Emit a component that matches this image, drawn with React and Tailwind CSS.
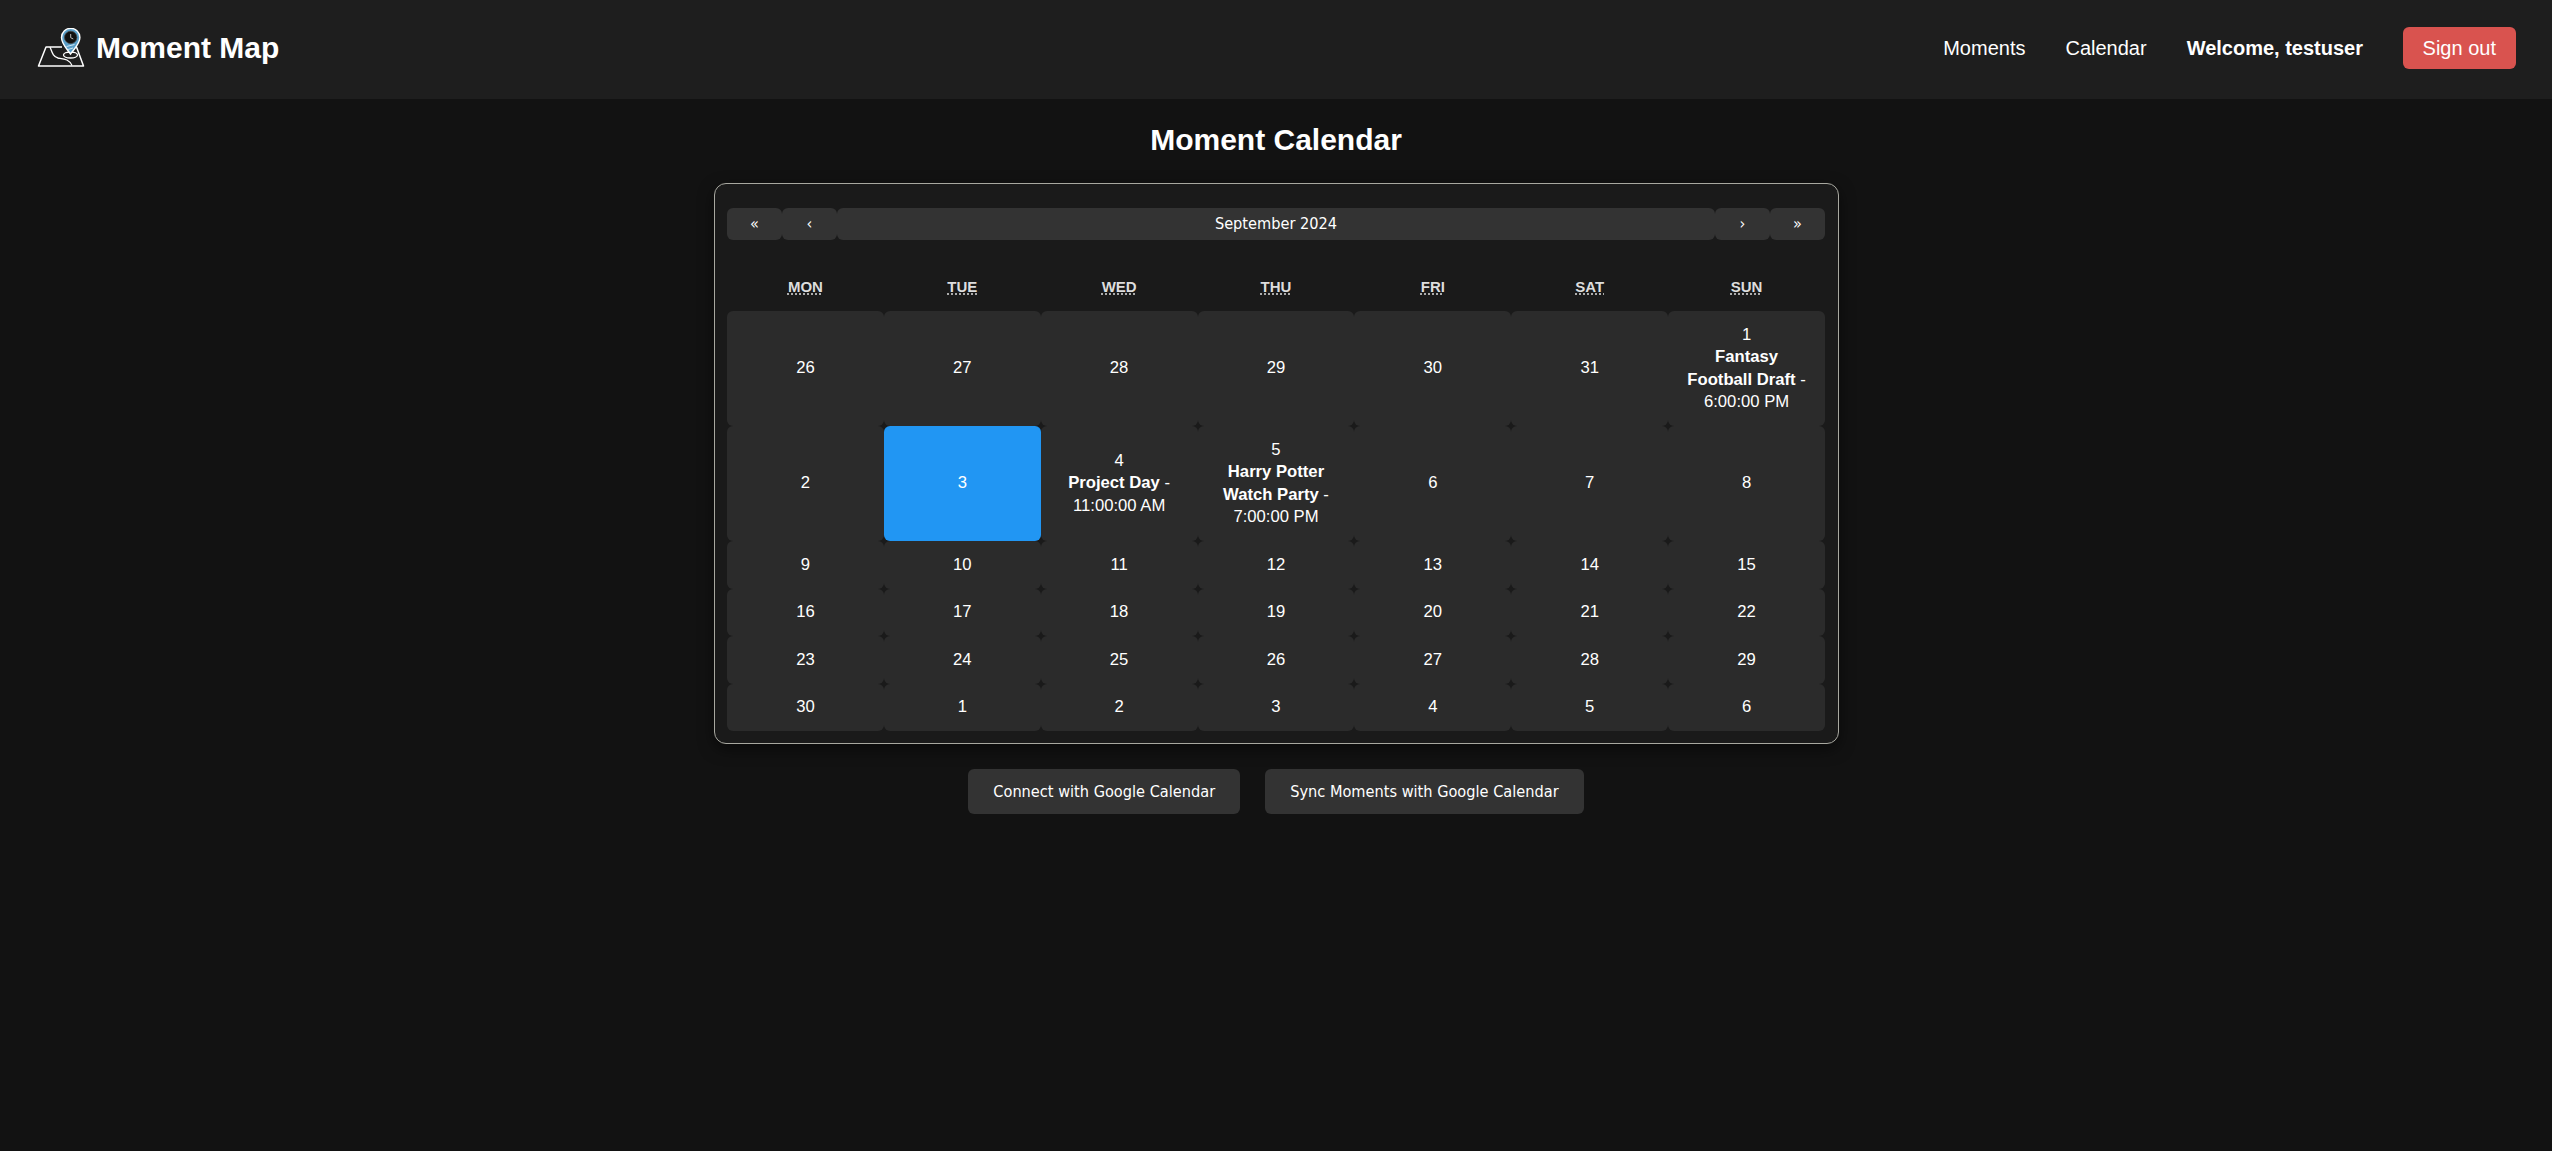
const sans = { fontFamily: '"Liberation Sans", Arial, sans-serif' };
const btnFont = { fontFamily: '"DejaVu Sans Condensed", "DejaVu Sans", sans-serif' };

function Logo() {
  return (
    <svg width="48" height="40" viewBox="0 0 48 40" fill="none" className="shrink-0">
      <path d="M25 19 H9 L1.5 38 H46.5 L39.5 19 H37" stroke="#fff" strokeWidth="1.5" strokeLinejoin="round" />
      <path d="M13 19 C15 24 16 29 21 30 C27 31 32 31 35 37.5" stroke="#fff" strokeWidth="1.3" />
      <ellipse cx="33.5" cy="27" rx="7" ry="3" stroke="#fff" strokeWidth="1.3" />
      <path d="M33.5 26 C30 21 24.5 16 24.5 9.5 A9.2 9.2 0 1 1 42.9 9.5 C42.9 16 37 21 33.5 26 Z" fill="#5a9fc9" stroke="#fff" strokeWidth="1.4" />
      <circle cx="33.7" cy="9.4" r="6.2" fill="#111" stroke="#444" strokeWidth="0.8" />
      <path d="M33.7 6 V9.7 L36.3 11" stroke="#bbb" strokeWidth="1" />
      <path d="M29.5 18.5 L37.5 16.5 M31 21.5 L36 20" stroke="#d8edf8" strokeWidth="0.9" />
    </svg>
  );
}

function Tile({ d, title, time, today }) {
  return (
    <div className={`flex flex-col items-center justify-center rounded-[6px] px-[14px] py-[12.5px] text-center text-[16.67px] leading-[22.5px] text-white ${today ? "bg-[#2196f3]" : "bg-[#2b2b2b]"}`}>
      <div>{d}</div>
      {title && (
        <div>
          <strong>{title}</strong> - {time}
        </div>
      )}
    </div>
  );
}

const weekdays = ["MON", "TUE", "WED", "THU", "FRI", "SAT", "SUN"];
const days = [
  { d: 26 }, { d: 27 }, { d: 28 }, { d: 29 }, { d: 30 }, { d: 31 },
  { d: 1, title: "Fantasy Football Draft", time: "6:00:00 PM" },
  { d: 2 }, { d: 3, today: true },
  { d: 4, title: "Project Day", time: "11:00:00 AM" },
  { d: 5, title: "Harry Potter Watch Party", time: "7:00:00 PM" },
  { d: 6 }, { d: 7 }, { d: 8 },
  ...[9, 10, 11, 12, 13, 14, 15, 16, 17, 18, 19, 20, 21, 22, 23, 24, 25, 26, 27, 28, 29, 30, 1, 2, 3, 4, 5, 6].map((d) => ({ d })),
];

const navBtn = "h-[32px] rounded-[6px] bg-[#333333] pt-[1px] text-[16.2px] text-white";

export default function App() {
  return (
    <div className="min-h-screen bg-[#121212] text-white" style={sans}>
      <header className="flex h-[99px] items-center justify-between bg-[#1e1e1e] pb-[3px] pl-[37px] pr-[36.5px]">
        <div className="flex items-center gap-[11px]">
          <Logo />
          <span className="text-[30px] font-bold leading-none">Moment Map</span>
        </div>
        <nav className="flex items-center text-[20px]">
          <a className="mr-[40px]">Moments</a>
          <a className="mr-[40px]">Calendar</a>
          <span className="mr-[40px] font-bold">Welcome, testuser</span>
          <button className="h-[42px] w-[112.5px] rounded-[6px] bg-[#d9534f] text-white">Sign out</button>
        </nav>
      </header>

      <main className="flex flex-col items-center">
        <h1 className="mt-[24px] mb-[26px] text-[30px] font-bold leading-[34px]">Moment Calendar</h1>

        <div className="ml-[1px] w-[1125px] rounded-[12px] border border-[#a8a8a0] bg-[#1a1a1a] pt-[24px] pr-[13px] pb-[12px] pl-[12px] shadow-[0_5px_15px_rgba(0,0,0,0.5)]">
          <div className="grid grid-cols-[55px_55px_1fr_55px_55px]" style={btnFont}>
            <button className={navBtn}>«</button>
            <button className={navBtn}>‹</button>
            <button className={navBtn}>September 2024</button>
            <button className={navBtn}>›</button>
            <button className={navBtn}>»</button>
          </div>

          <div className="mt-[25px] grid h-[46px] grid-cols-7 items-center pb-[2px] text-center text-[15px] font-bold text-[#dddddd]">
            {weekdays.map((w) => (
              <div key={w}>
                <abbr className="[text-decoration:underline_dotted] underline-offset-[2px]">{w}</abbr>
              </div>
            ))}
          </div>

          <div className="grid grid-cols-7">
            {days.map((t, i) => (
              <Tile key={i} {...t} />
            ))}
          </div>
        </div>

        <div className="mt-[25px] flex gap-[25px]" style={btnFont}>
          <button className="h-[45px] rounded-[6px] bg-[#333333] px-[25px] pt-[1px] text-[16.2px] text-white">Connect with Google Calendar</button>
          <button className="h-[45px] rounded-[6px] bg-[#333333] px-[25px] pt-[1px] text-[16.2px] text-white">Sync Moments with Google Calendar</button>
        </div>
      </main>
    </div>
  );
}
